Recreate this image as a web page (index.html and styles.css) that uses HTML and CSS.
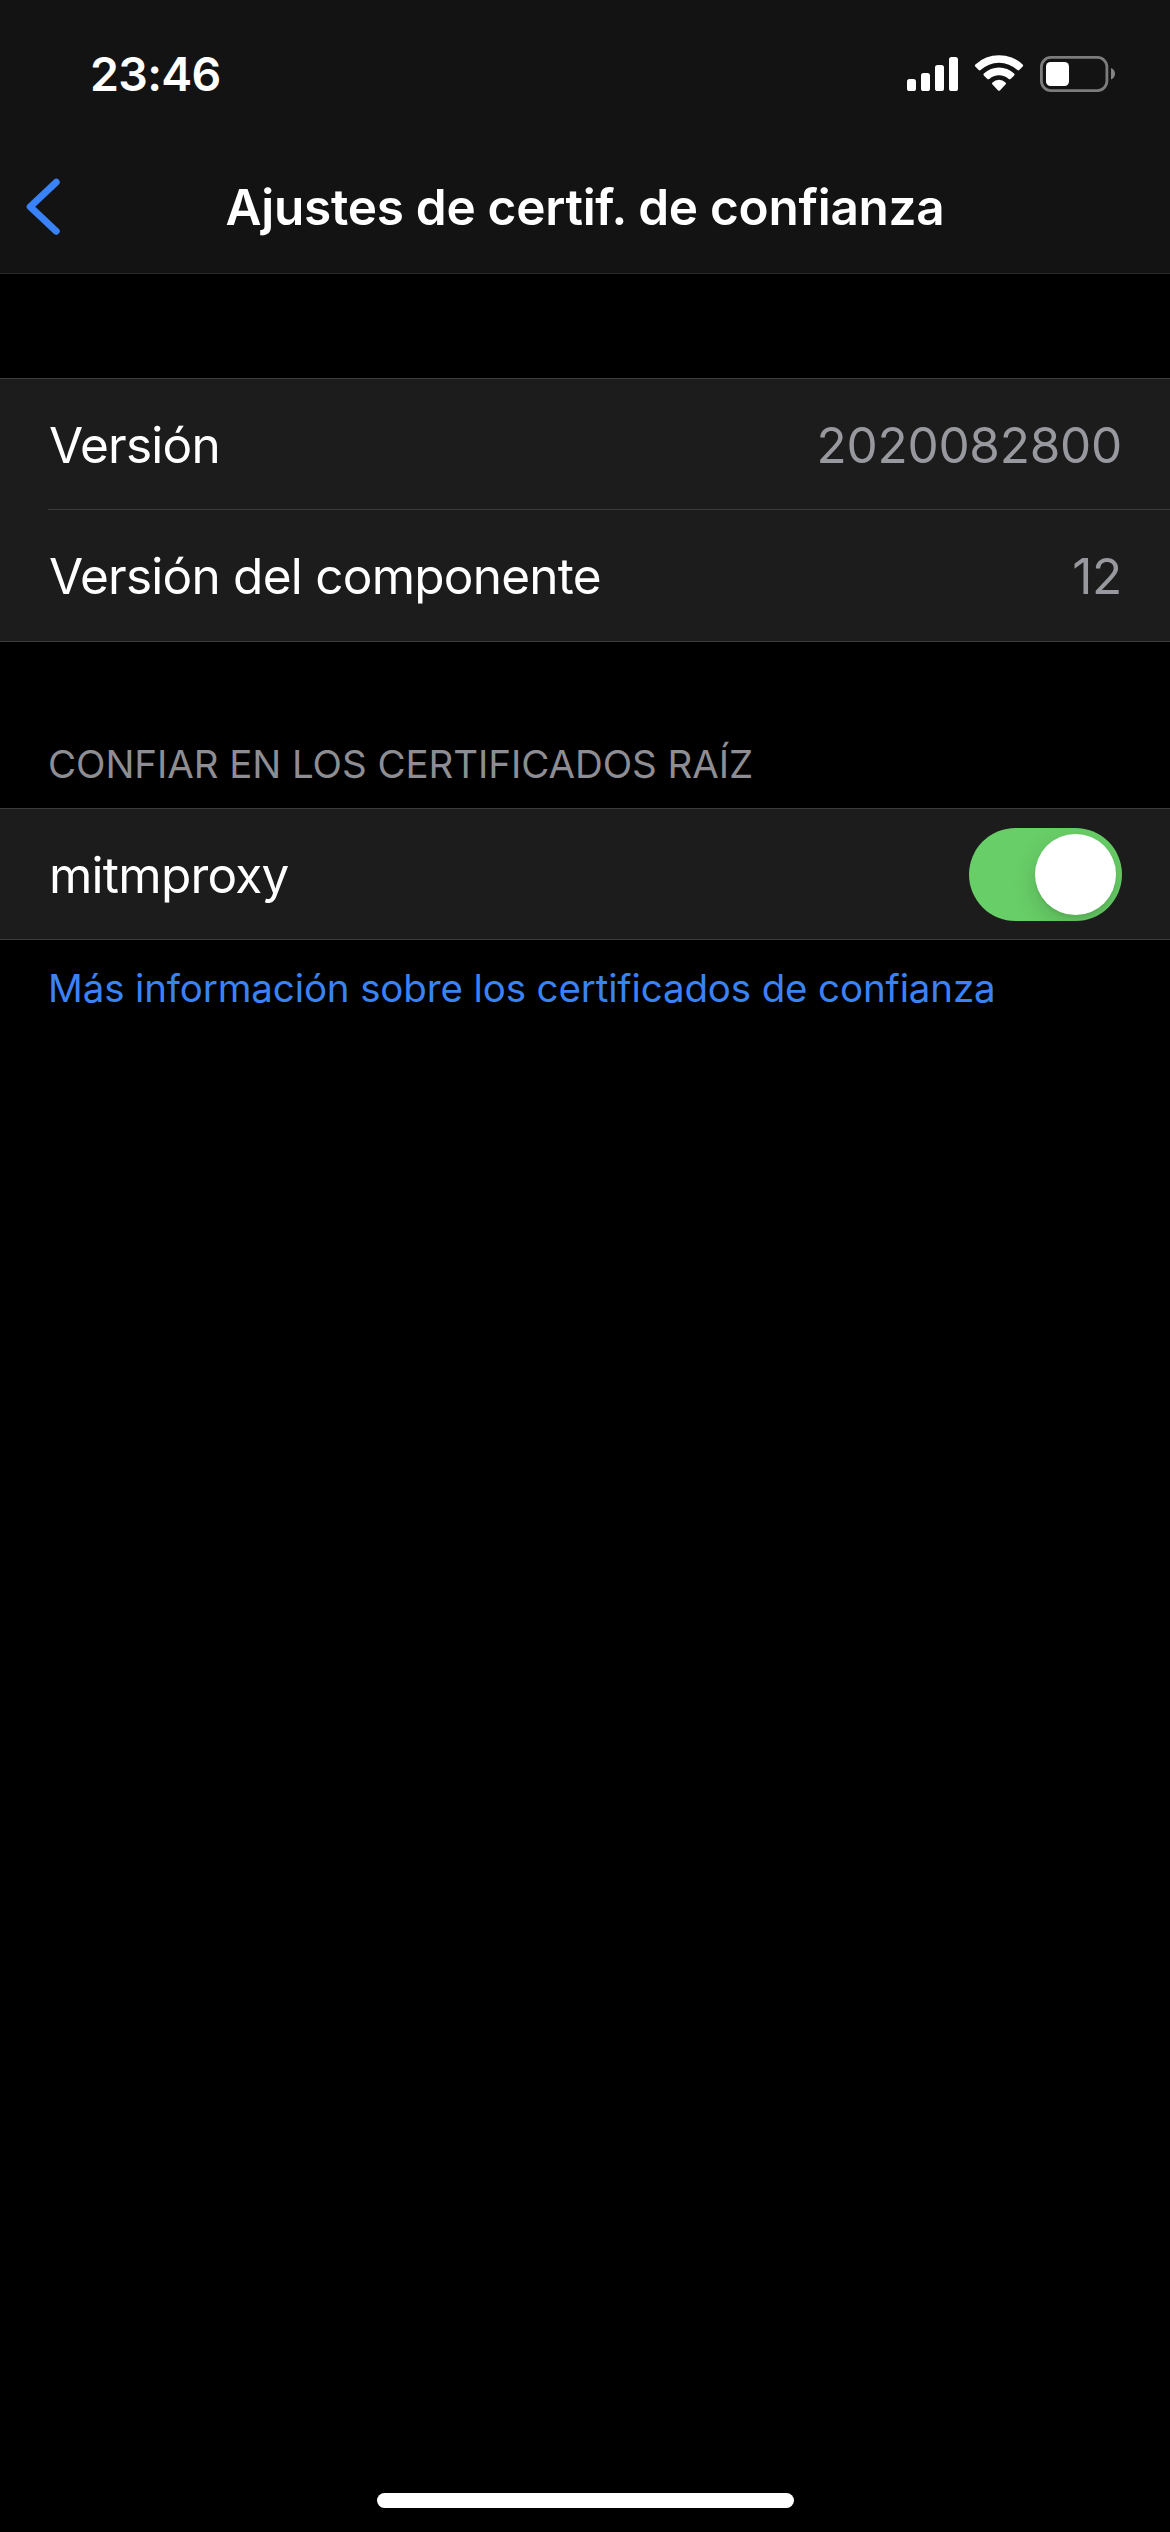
FILE: index.html
```html
<!DOCTYPE html>
<html lang="es">
<head>
<meta charset="utf-8">
<title>Ajustes de certif. de confianza</title>
<link rel="stylesheet" href="styles.css">
</head>
<body>
<div class="screen">
  <header class="top">
    <div class="status">
      <span class="time">23:46</span>
      <svg class="status-icons" width="212" height="42" viewBox="905 53 212 42" aria-hidden="true">
        <g fill="#fff">
          <rect x="907" y="79" width="9" height="12" rx="2.6"/>
          <rect x="921" y="73" width="9" height="18" rx="2.6"/>
          <rect x="935" y="65" width="9" height="26" rx="2.6"/>
          <rect x="949" y="57" width="9" height="34" rx="2.6"/>
          <path d="M975.3 66.6Q974.3 65.5 975.4 64.5A34.4 34.4 0 0 1 1022.6 64.5Q1023.7 65.5 1022.7 66.6L1019.3 70.1Q1018.4 70.9 1017.4 70A27 27 0 0 0 980.6 70Q979.6 70.9 978.7 70.1Z"/>
          <path d="M983.8 75.4Q982.9 74.4 983.9 73.5A22 22 0 0 1 1014.1 73.5Q1015.1 74.4 1014.2 75.4L1010.6 78.9Q1009.7 79.7 1008.7 78.9A14.7 14.7 0 0 0 989.3 78.9Q988.3 79.7 987.4 78.9Z"/>
          <path d="M992.3 84.3Q991.4 83.4 992.5 82.4A9.6 9.6 0 0 1 1005.5 82.4Q1006.6 83.4 1005.7 84.3L999.9 90.4Q999 91.3 998.1 90.4Z"/>
          <rect x="1046" y="62" width="23" height="24" rx="4.5"/>
        </g>
        <rect x="1041.4" y="57.4" width="65.5" height="33.2" rx="9.5" fill="none" stroke="#7c7c7c" stroke-width="2.8"/>
        <path d="M1111 68C1113.6 69.1 1115 71.3 1115 73.8C1115 76.3 1113.6 78.5 1111 79.6Z" fill="#858585"/>
      </svg>
    </div>
    <nav class="navbar">
      <svg class="back" width="36" height="62" viewBox="0 0 36 62" aria-hidden="true"><path d="M30.2 6.2L4.2 30.7L30.2 55.2" fill="none" stroke="#3a82f7" stroke-width="7" stroke-linecap="round" stroke-linejoin="round"/></svg>
      <h1 class="title">Ajustes de certif. de confianza</h1>
    </nav>
  </header>
  <main>
    <section class="group">
      <div class="row"><span class="label">Versión</span><span class="value">2020082800</span></div>
      <div class="row divided"><span class="label">Versión del componente</span><span class="value">12</span></div>
    </section>
    <h2 class="caption">CONFIAR EN LOS CERTIFICADOS RAÍZ</h2>
    <section class="group">
      <div class="row"><span class="label">mitmproxy</span><span class="switch"><span class="knob"></span></span></div>
    </section>
    <a class="more">Más información sobre los certificados de confianza</a>
  </main>
  <div class="home"></div>
</div>
</body>
</html>
```
FILE: styles.css
```css
* { box-sizing: border-box; margin: 0; padding: 0; }

body {
  background: #000;
  color: #fff;
  font-family: Inter, "Liberation Sans", sans-serif;
}

.screen {
  display: flex;
  flex-direction: column;
  width: 1170px;
  height: 2532px;
  overflow: hidden;
  background: #000;
}

.top {
  height: 274px;
  background: #131313;
  border-bottom: 1px solid #2a2a2a;
}

.status {
  display: flex;
  justify-content: space-between;
  align-items: flex-start;
  height: 141px;
  padding: 53px 53px 0 90px;
}

.time {
  font-size: 46.5px;
  font-weight: 600;
  line-height: 42px;
  letter-spacing: -0.7px;
}

.navbar {
  display: grid;
  grid-template-columns: 60px 1fr 60px;
  align-items: center;
  height: 132px;
  padding: 0 26px;
}

.title {
  font-size: 49.5px;
  font-weight: 600;
  line-height: 60px;
  letter-spacing: -0.27px;
  text-align: center;
  white-space: nowrap;
}

main { flex: 1; padding-top: 104px; }

.group {
  background: #1c1c1c;
  border-top: 1px solid #3c3c3d;
  border-bottom: 1px solid #3c3c3d;
}

.row {
  display: flex;
  align-items: center;
  justify-content: space-between;
  height: 130px;
  padding: 0 48px 0 49px;
  font-size: 49.5px;
  line-height: 60px;
}

.label,
.value { padding-top: 2px; }

.label { letter-spacing: -0.75px; }

.divided {
  height: 132px;
  background: linear-gradient(#3c3c3d, #3c3c3d) 48px 0 / 100% 1px no-repeat;
}

.value {
  color: #98989f;
  letter-spacing: -0.25px;
}

.caption {
  height: 166px;
  padding: 98px 48px 0;
  font-size: 38.5px;
  font-weight: 400;
  line-height: 48px;
  letter-spacing: -0.07px;
  color: #8d8d93;
  white-space: nowrap;
}

.switch {
  display: flex;
  justify-content: flex-end;
  width: 153px;
  height: 93px;
  padding: 6px;
  border-radius: 47px;
  background: #68ce67;
  overflow: hidden;
}

.knob {
  width: 81px;
  height: 81px;
  border-radius: 50%;
  background: #fff;
  box-shadow: 0 9px 24px rgba(0, 0, 0, 0.15), 0 3px 3px rgba(0, 0, 0, 0.05);
}

.more {
  display: block;
  padding: 24px 48px 0;
  font-size: 38.5px;
  line-height: 48px;
  letter-spacing: -0.13px;
  color: #3a82f7;
  white-space: nowrap;
}

.home {
  width: 417px;
  height: 15px;
  margin: 0 auto 24px;
  border-radius: 8px;
  background: #fff;
}
```
